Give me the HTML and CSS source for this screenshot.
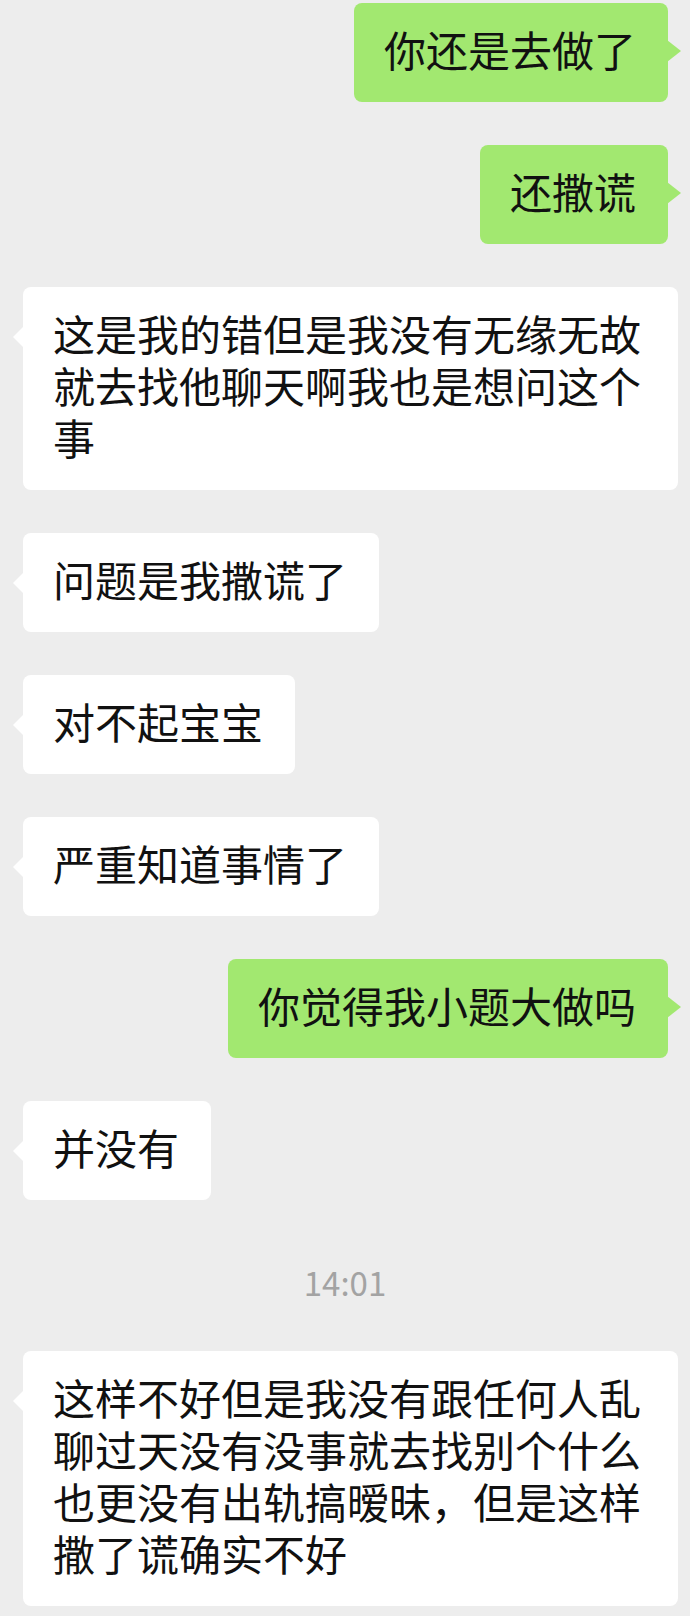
FILE: index.html
```html
<!DOCTYPE html>
<html lang="zh-CN">
<head>
    <meta charset="UTF-8">
    <meta name="viewport" content="width=device-width, initial-scale=1.0">
    <title>聊天记录</title>
    <link rel="stylesheet" href="styles.css">
</head>
<body>
    <div class="chat">
        <div class="row mine"><div class="bubble">你还是去做了</div></div>
        <div class="row mine"><div class="bubble">还撒谎</div></div>
        <div class="row theirs"><div class="bubble">这是我的错但是我没有无缘无故就去找他聊天啊我也是想问这个事</div></div>
        <div class="row theirs"><div class="bubble">问题是我撒谎了</div></div>
        <div class="row theirs"><div class="bubble">对不起宝宝</div></div>
        <div class="row theirs"><div class="bubble">严重知道事情了</div></div>
        <div class="row mine"><div class="bubble">你觉得我小题大做吗</div></div>
        <div class="row theirs"><div class="bubble">并没有</div></div>
        <div class="time">14:01</div>
        <div class="row theirs"><div class="bubble">这样不好但是我没有跟任何人乱聊过天没有没事就去找别个什么也更没有出轨搞暧昧，但是这样撒了谎确实不好</div></div>
    </div>
</body>
</html>
```

FILE: styles.css
```css
body {
    margin: 0;
    background-color: #ededed;
    font-family: "Noto Sans CJK SC", "Noto Sans", sans-serif;
    color: #111;
}
.chat {
    display: flex;
    flex-direction: column;
    gap: 43px;
    padding: 3px 0 20px;
}
.row {
    display: flex;
}
.row.mine {
    justify-content: flex-end;
    padding-right: 22px;
}
.row.theirs {
    justify-content: flex-start;
    padding-left: 23px;
}
.bubble {
    position: relative;
    box-sizing: border-box;
    max-width: 655px;
    padding: 20px 32px 27px 30px;
    font-size: 42px;
    line-height: 52px;
    border-radius: 8px;
    word-break: break-all;
}
.mine .bubble {
    background-color: #a2e870;
}
.theirs .bubble {
    background-color: #ffffff;
}
.mine .bubble::after {
    content: "";
    position: absolute;
    right: -13px;
    top: 37px;
    border-top: 11px solid transparent;
    border-bottom: 11px solid transparent;
    border-left: 14px solid #a2e870;
}
.theirs .bubble::before {
    content: "";
    position: absolute;
    left: -10px;
    top: 39px;
    border-top: 11px solid transparent;
    border-bottom: 11px solid transparent;
    border-right: 11px solid #ffffff;
}
.time {
    text-align: center;
    font-size: 33px;
    line-height: 40px;
    color: #a3a3a3;
    padding: 19px 0 6px;
}
```
